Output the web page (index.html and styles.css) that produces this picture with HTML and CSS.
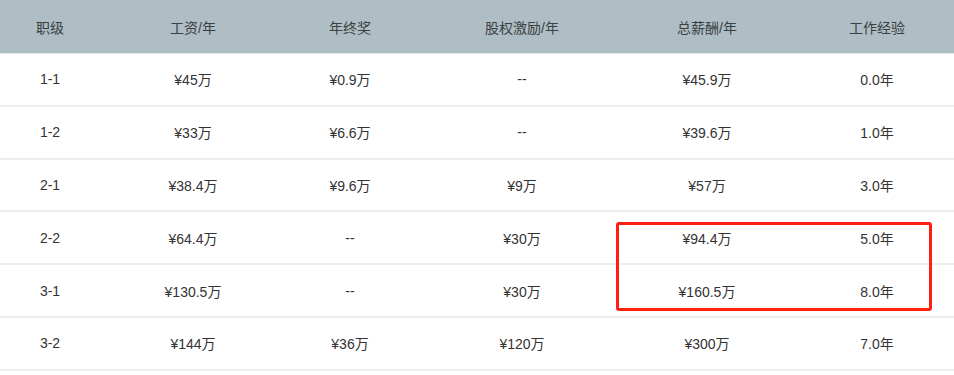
FILE: index.html
```html
<!DOCTYPE html>
<html lang="zh">
<head>
<meta charset="utf-8">
<link rel="stylesheet" href="styles.css">
</head>
<body>
<div class="wrap">
  <div class="table">
    <div class="row head">
      <div>职级</div><div>工资/年</div><div>年终奖</div><div>股权激励/年</div><div>总薪酬/年</div><div>工作经验</div>
    </div>
    <div class="row"><div>1-1</div><div>¥45万</div><div>¥0.9万</div><div>--</div><div>¥45.9万</div><div>0.0年</div></div>
    <div class="row"><div>1-2</div><div>¥33万</div><div>¥6.6万</div><div>--</div><div>¥39.6万</div><div>1.0年</div></div>
    <div class="row"><div>2-1</div><div>¥38.4万</div><div>¥9.6万</div><div>¥9万</div><div>¥57万</div><div>3.0年</div></div>
    <div class="row"><div>2-2</div><div>¥64.4万</div><div>--</div><div>¥30万</div><div>¥94.4万</div><div>5.0年</div></div>
    <div class="row"><div>3-1</div><div>¥130.5万</div><div>--</div><div>¥30万</div><div>¥160.5万</div><div>8.0年</div></div>
    <div class="row"><div>3-2</div><div>¥144万</div><div>¥36万</div><div>¥120万</div><div>¥300万</div><div>7.0年</div></div>
  </div>
  <div class="highlight"></div>
</div>
</body>
</html>
```
FILE: styles.css
```css
html, body {
  margin: 0;
  padding: 0;
  background: #fff;
  overflow: hidden;
}
.wrap {
  position: relative;
  width: 954px;
  height: 375px;
  overflow: hidden;
}
.table {
  width: 970px;
  font-family: "Liberation Sans", "Noto Sans CJK SC", sans-serif;
  font-size: 14px;
  color: #333;
}
.row {
  display: grid;
  grid-template-columns: 100px 186px 128px 216px 154px 186px;
  height: 50.8px;
  align-items: center;
  border-bottom: 2px solid #ededed;
}
.row > div {
  text-align: center;
}
.row.head {
  height: 53px;
  background: #afbdc4;
  border-bottom: 1px solid #e4e8ea;
  color: #3a3f42;
}
.highlight {
  position: absolute;
  left: 616px;
  top: 222px;
  width: 310px;
  height: 83px;
  border: 3px solid #ff1e12;
  border-radius: 3px;
}
```
